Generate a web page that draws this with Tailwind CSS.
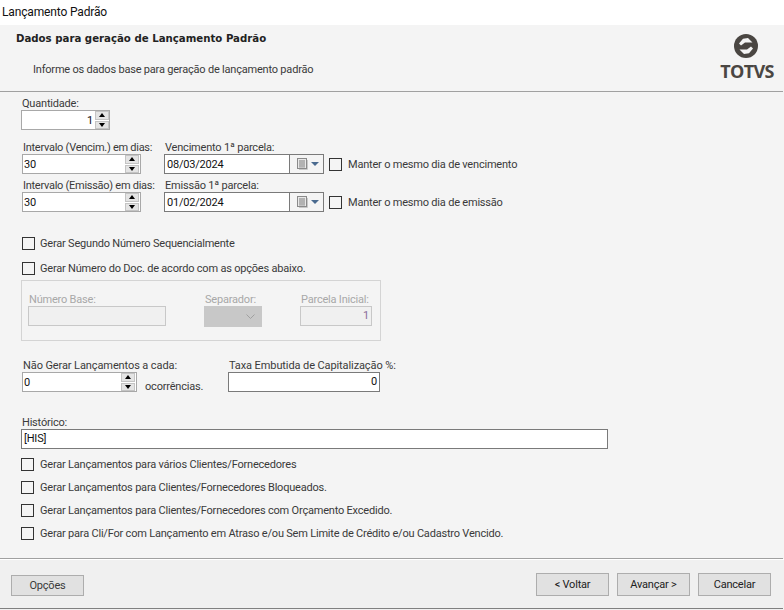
<!DOCTYPE html>
<html lang="pt-BR">
<head>
  <meta charset="UTF-8" />
  <title>Lançamento Padrão</title>
  <script src="https://cdn.jsdelivr.net/npm/@tailwindcss/browser@4"></script>
</head>
<body class="w-[784px] h-[610px] overflow-hidden bg-[#f4f4f4] flex flex-col font-['Roboto',sans-serif] text-[11px] leading-[13px] tracking-[-0.2px] text-[#3a3a3a]">

  <!-- title bar -->
  <div class="h-[25px] bg-white flex items-center pl-[2px] text-[12px] tracking-[-0.15px] text-[#111]">Lançamento Padrão</div>

  <!-- header -->
  <div class="h-[66px] flex justify-between">
    <div class="pl-[16px]">
      <div class="mt-[7px] font-['DejaVu_Sans',sans-serif] font-bold text-[10.2px] tracking-normal text-[#222]">Dados para geração de Lançamento Padrão</div>
      <div class="mt-[18px] pl-[17px]">Informe os dados base para geração de lançamento padrão</div>
    </div>
    <div class="w-[64px] mr-[5px] flex flex-col items-center pt-[8px]">
      <svg width="26" height="26" viewBox="0 0 26 26">
        <circle cx="12" cy="13" r="12" fill="#4a4642" />
        <path d="M5 10.5 L9 5.8 L14 5 L18.5 9.5 L11 9.5 L7 12.5 Z" fill="#f4f4f4" />
        <path d="M19 15.5 L15 20.2 L10 21 L5.5 16.5 L13 16.5 L17 13.5 Z" fill="#f4f4f4" />
      </svg>
      <div class="mt-[3px] font-['Open_Sans',sans-serif] font-bold text-[18px] leading-[18px] tracking-[-0.7px] text-[#4a4642]">TOTVS</div>
    </div>
  </div>
  <div class="h-px w-[783px] bg-[#a0a0a0] shrink-0"></div>

  <!-- form -->
  <div class="flex-1 flex flex-col">

    <div class="mt-[5px] ml-[21px] w-[89px]">
      <div class="h-[13px] pl-px">Quantidade:</div>
      <div class="h-[20px] flex items-center border border-[#a8a8a8] bg-white">
        <div class="flex-1 text-right pr-[2px] text-[#111]">1</div>
        <div class="w-[14px] h-[18px] flex flex-col gap-px">
          <div class="flex-1 bg-[#e4e4e4] border border-[#c4c4c4] flex items-center justify-center"><div class="border-x-[3px] border-x-transparent border-b-[4px] border-b-black"></div></div>
          <div class="flex-1 bg-[#e4e4e4] border border-[#c4c4c4] flex items-center justify-center"><div class="border-x-[3px] border-x-transparent border-t-[4px] border-t-black"></div></div>
        </div>
      </div>
    </div>

    <div class="mt-[11px] ml-[22px] flex">
      <div class="w-[119px]">
        <div class="h-[13px] pl-px whitespace-nowrap tracking-[-0.27px]">Intervalo (Vencim.) em dias:</div>
        <div class="h-[20px] flex items-center border border-[#a8a8a8] bg-white">
          <div class="flex-1 pl-[1px] text-[#111]">30</div>
          <div class="w-[14px] h-[18px] mr-[1px] flex flex-col gap-px">
            <div class="flex-1 bg-[#e4e4e4] border border-[#c4c4c4] flex items-center justify-center"><div class="border-x-[3px] border-x-transparent border-b-[4px] border-b-black"></div></div>
            <div class="flex-1 bg-[#e4e4e4] border border-[#c4c4c4] flex items-center justify-center"><div class="border-x-[3px] border-x-transparent border-t-[4px] border-t-black"></div></div>
          </div>
        </div>
      </div>
      <div class="ml-[23px] w-[160px]">
        <div class="h-[13px] pl-px whitespace-nowrap">Vencimento 1ª parcela:</div>
        <div class="h-[20px] flex items-center border border-[#7a7a7a] bg-white">
          <div class="w-[124px] pl-[2px] text-[#111]">08/03/2024</div>
          <div class="h-full w-[34px] border-l border-[#7a7a7a] bg-[#f4f4f4] flex items-center pl-[7px] gap-[3px]">
            <svg width="11" height="12" viewBox="0 0 11 12"><rect x="0.5" y="0.5" width="9" height="10" fill="#e8e8e8" stroke="#8a8a8a" /><path d="M2 3h6M2 5h6M2 7h6M2 9h6M3 2v7M5 2v7M7 2v7" stroke="#a0a0a0" /><path d="M10.5 2v9.5H2" fill="none" stroke="#c8c8c8" /></svg>
            <div class="border-x-[4px] border-x-transparent border-t-[4px] border-t-[#4a6a8f]"></div>
          </div>
        </div>
      </div>
      <div class="ml-[5px] mt-[17px] flex items-center h-[13px] whitespace-nowrap">
        <div class="w-[13px] h-[13px] border border-[#333] bg-[#f4f4f4] shrink-0"></div>
        <div class="ml-[6px]">Manter o mesmo dia de vencimento</div>
      </div>
    </div>

    <div class="mt-[5px] ml-[22px] flex">
      <div class="w-[119px]">
        <div class="h-[13px] pl-px whitespace-nowrap tracking-[-0.27px]">Intervalo (Emissão) em dias:</div>
        <div class="h-[20px] flex items-center border border-[#a8a8a8] bg-white">
          <div class="flex-1 pl-[1px] text-[#111]">30</div>
          <div class="w-[14px] h-[18px] mr-[1px] flex flex-col gap-px">
            <div class="flex-1 bg-[#e4e4e4] border border-[#c4c4c4] flex items-center justify-center"><div class="border-x-[3px] border-x-transparent border-b-[4px] border-b-black"></div></div>
            <div class="flex-1 bg-[#e4e4e4] border border-[#c4c4c4] flex items-center justify-center"><div class="border-x-[3px] border-x-transparent border-t-[4px] border-t-black"></div></div>
          </div>
        </div>
      </div>
      <div class="ml-[23px] w-[160px]">
        <div class="h-[13px] pl-px whitespace-nowrap">Emissão 1ª parcela:</div>
        <div class="h-[20px] flex items-center border border-[#7a7a7a] bg-white">
          <div class="w-[124px] pl-[2px] text-[#111]">01/02/2024</div>
          <div class="h-full w-[34px] border-l border-[#7a7a7a] bg-[#f4f4f4] flex items-center pl-[7px] gap-[3px]">
            <svg width="11" height="12" viewBox="0 0 11 12"><rect x="0.5" y="0.5" width="9" height="10" fill="#e8e8e8" stroke="#8a8a8a" /><path d="M2 3h6M2 5h6M2 7h6M2 9h6M3 2v7M5 2v7M7 2v7" stroke="#a0a0a0" /><path d="M10.5 2v9.5H2" fill="none" stroke="#c8c8c8" /></svg>
            <div class="border-x-[4px] border-x-transparent border-t-[4px] border-t-[#4a6a8f]"></div>
          </div>
        </div>
      </div>
      <div class="ml-[5px] mt-[17px] flex items-center h-[13px] whitespace-nowrap">
        <div class="w-[13px] h-[13px] border border-[#333] bg-[#f4f4f4] shrink-0"></div>
        <div class="ml-[6px]">Manter o mesmo dia de emissão</div>
      </div>
    </div>

    <div class="mt-[25px] ml-[22px] flex items-center h-[13px]">
      <div class="w-[13px] h-[13px] border border-[#333] shrink-0"></div>
      <div class="ml-[5px]">Gerar Segundo Número Sequencialmente</div>
    </div>
    <div class="mt-[12px] ml-[22px] flex items-center h-[13px]">
      <div class="w-[13px] h-[13px] border border-[#333] shrink-0"></div>
      <div class="ml-[5px]">Gerar Número do Doc. de acordo com as opções abaixo.</div>
    </div>

    <!-- disabled group -->
    <div class="mt-[5px] ml-[21px] w-[360px] h-[61px] border border-[#d4d4d4] flex pl-[6px] pt-[12px] text-[#a8a8a8]">
      <div class="w-[138px]">
        <div class="h-[13px] pl-px">Número Base:</div>
        <div class="h-[20px] border border-[#c8c8c8] bg-[#f0f0f0]"></div>
      </div>
      <div class="ml-[38px] w-[58px]">
        <div class="h-[13px] pl-px">Separador:</div>
        <div class="h-[21px] bg-[#c8c8c8] flex items-center justify-end pr-[7px]">
          <svg width="9" height="5" viewBox="0 0 9 5"><path d="M0.5 0.5 L4.5 4.5 L8.5 0.5" fill="none" stroke="#a0a0a0" /></svg>
        </div>
      </div>
      <div class="ml-[38px] w-[72px]">
        <div class="h-[13px] pl-px whitespace-nowrap">Parcela Inicial:</div>
        <div class="h-[20px] border border-[#c8c8c8] bg-[#f0f0f0] text-right pr-[2px] leading-[18px] text-[#8a6d9a]">1</div>
      </div>
    </div>

    <div class="mt-[18px] ml-[22px] flex">
      <div class="w-[115px]">
        <div class="h-[13px] pl-px whitespace-nowrap tracking-[-0.1px]">Não Gerar Lançamentos a cada:</div>
        <div class="h-[20px] flex items-center border border-[#a8a8a8] bg-white">
          <div class="flex-1 pl-[1px] text-[#111]">0</div>
          <div class="w-[14px] h-[18px] mr-[1px] flex flex-col gap-px">
            <div class="flex-1 bg-[#e4e4e4] border border-[#c4c4c4] flex items-center justify-center"><div class="border-x-[3px] border-x-transparent border-b-[4px] border-b-black"></div></div>
            <div class="flex-1 bg-[#e4e4e4] border border-[#c4c4c4] flex items-center justify-center"><div class="border-x-[3px] border-x-transparent border-t-[4px] border-t-black"></div></div>
          </div>
        </div>
      </div>
      <div class="ml-[8px] w-[83px] pt-[21px] whitespace-nowrap">ocorrências.</div>
      <div class="w-[152px]">
        <div class="h-[13px] pl-px whitespace-nowrap tracking-[-0.1px]">Taxa Embutida de Capitalização %:</div>
        <div class="h-[20px] border border-[#7a7a7a] bg-white text-right pr-[2px] leading-[18px] text-[#111]">0</div>
      </div>
    </div>

    <div class="mt-[23px] ml-[21px] w-[587px]">
      <div class="h-[13px] pl-px">Histórico:</div>
      <div class="h-[20px] border border-[#7a7a7a] bg-white pl-[2px] leading-[18px] text-[#111]">[HIS]</div>
    </div>

    <div class="mt-[9px] ml-[21px] flex items-center h-[13px]">
      <div class="w-[13px] h-[13px] border border-[#333] shrink-0"></div>
      <div class="ml-[6px]">Gerar Lançamentos para vários Clientes/Fornecedores</div>
    </div>
    <div class="mt-[10px] ml-[21px] flex items-center h-[13px]">
      <div class="w-[13px] h-[13px] border border-[#333] shrink-0"></div>
      <div class="ml-[6px]">Gerar Lançamentos para Clientes/Fornecedores Bloqueados.</div>
    </div>
    <div class="mt-[10px] ml-[21px] flex items-center h-[13px]">
      <div class="w-[13px] h-[13px] border border-[#333] shrink-0"></div>
      <div class="ml-[6px]">Gerar Lançamentos para Clientes/Fornecedores com Orçamento Excedido.</div>
    </div>
    <div class="mt-[10px] ml-[21px] flex items-center h-[13px]">
      <div class="w-[13px] h-[13px] border border-[#333] shrink-0"></div>
      <div class="ml-[6px]">Gerar para Cli/For com Lançamento em Atraso e/ou Sem Limite de Crédito e/ou Cadastro Vencido.</div>
    </div>
  </div>

  <!-- footer -->
  <div class="h-px w-[783px] bg-[#a0a0a0] shrink-0"></div>
  <div class="h-[49px] bg-[#f0f0f0] border-t border-white flex">
    <div class="ml-[11px] mt-[15px] w-[73px] h-[21px] border border-[#adadad] bg-[#e1e1e1] flex items-center justify-center">Opções</div>
    <div class="ml-auto mt-[13px] mr-[13px] flex gap-[8px]">
      <div class="w-[73px] h-[23px] border border-[#adadad] bg-[#e1e1e1] flex items-center justify-center text-[#222]">&lt; Voltar</div>
      <div class="w-[73px] h-[23px] border border-[#adadad] bg-[#e1e1e1] flex items-center justify-center text-[#222]">Avançar &gt;</div>
      <div class="w-[73px] h-[23px] border border-[#adadad] bg-[#e1e1e1] flex items-center justify-center text-[#222]">Cancelar</div>
    </div>
  </div>
  <div class="h-px w-[783px] bg-[#808080] shrink-0"></div>
  <div class="h-px bg-[#f0f0f0] shrink-0"></div>
</body>
</html>
